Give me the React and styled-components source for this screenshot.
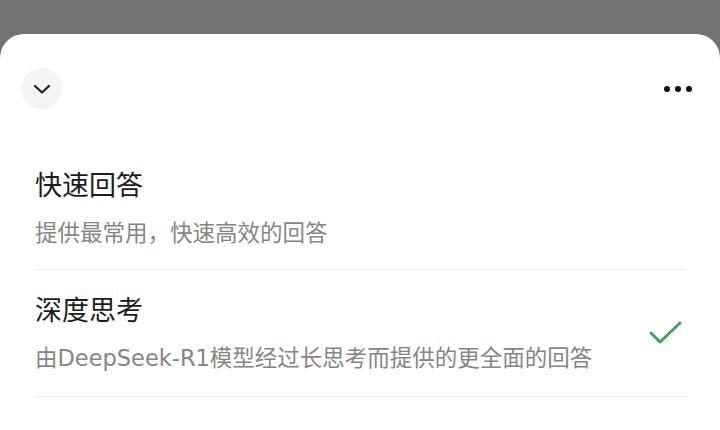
import React from "react";
import styled, { createGlobalStyle } from "styled-components";

const GlobalStyle = createGlobalStyle`
  html, body {
    margin: 0;
    padding: 0;
    background: #727272;
  }
  body {
    font-family: "Noto Sans CJK SC", "Noto Sans", sans-serif;
  }
`;

const Page = styled.div`
  width: 720px;
  height: 430px;
  display: flex;
  flex-direction: column;
  overflow: hidden;
`;

const Backdrop = styled.div`
  height: 34px;
  flex-shrink: 0;
  background: #727272;
`;

const Sheet = styled.div`
  flex: 1;
  background: #fff;
  border-radius: 24px 24px 0 0;
  padding: 34px 27px 0 21px;
`;

const TopBar = styled.div`
  display: flex;
  align-items: center;
  justify-content: space-between;
  height: 41px;
`;

const RoundButton = styled.button`
  width: 41px;
  height: 41px;
  border-radius: 50%;
  border: none;
  background: #f4f4f4;
  display: flex;
  align-items: center;
  justify-content: center;
  padding: 0;
`;

const MoreButton = styled.div`
  display: flex;
  gap: 5px;
  align-items: center;
  margin-right: 1px;
`;

const Dot = styled.span`
  width: 6px;
  height: 6px;
  border-radius: 50%;
  background: #111;
`;

const List = styled.div`
  margin: 56px 7px 0 14px;
`;

const Option = styled.div`
  display: flex;
  align-items: center;
  justify-content: space-between;
  border-bottom: 1px solid #ececec;
  padding: ${(p) => (p.$first ? "0 0 20px" : "20px 0 22px")};
`;

const Texts = styled.div`
  display: flex;
  flex-direction: column;
  gap: 14px;
`;

const Title = styled.div`
  font-size: 27px;
  line-height: 38px;
  color: #1c1c1c;
`;

const Desc = styled.div`
  font-family: "DejaVu Sans", "Noto Sans CJK SC", sans-serif;
  font-size: 22.5px;
  line-height: 32px;
  color: #858585;
`;

const Check = () => (
  <svg width="36" height="28" viewBox="0 0 36 28" style={{ marginRight: 2 }}>
    <path
      d="M3 15 L12 24 L32 5"
      fill="none"
      stroke="#3ea55d"
      strokeWidth="3"
      strokeLinecap="round"
      strokeLinejoin="round"
    />
  </svg>
);

const Chevron = () => (
  <svg width="18" height="12" viewBox="0 0 18 12">
    <path
      d="M2 3 L9 9.5 L16 3"
      fill="none"
      stroke="#222"
      strokeWidth="2.2"
      strokeLinecap="round"
      strokeLinejoin="round"
    />
  </svg>
);

const options = [
  { title: "快速回答", desc: "提供最常用，快速高效的回答", checked: false },
  {
    title: "深度思考",
    desc: "由DeepSeek-R1模型经过长思考而提供的更全面的回答",
    checked: true,
  },
];

export default function App() {
  return (
    <Page>
      <GlobalStyle />
      <Backdrop />
      <Sheet>
        <TopBar>
          <RoundButton>
            <Chevron />
          </RoundButton>
          <MoreButton>
            <Dot />
            <Dot />
            <Dot />
          </MoreButton>
        </TopBar>
        <List>
          {options.map((o, i) => (
            <Option key={o.title} $first={i === 0}>
              <Texts>
                <Title>{o.title}</Title>
                <Desc>{o.desc}</Desc>
              </Texts>
              {o.checked && <Check />}
            </Option>
          ))}
        </List>
      </Sheet>
    </Page>
  );
}
